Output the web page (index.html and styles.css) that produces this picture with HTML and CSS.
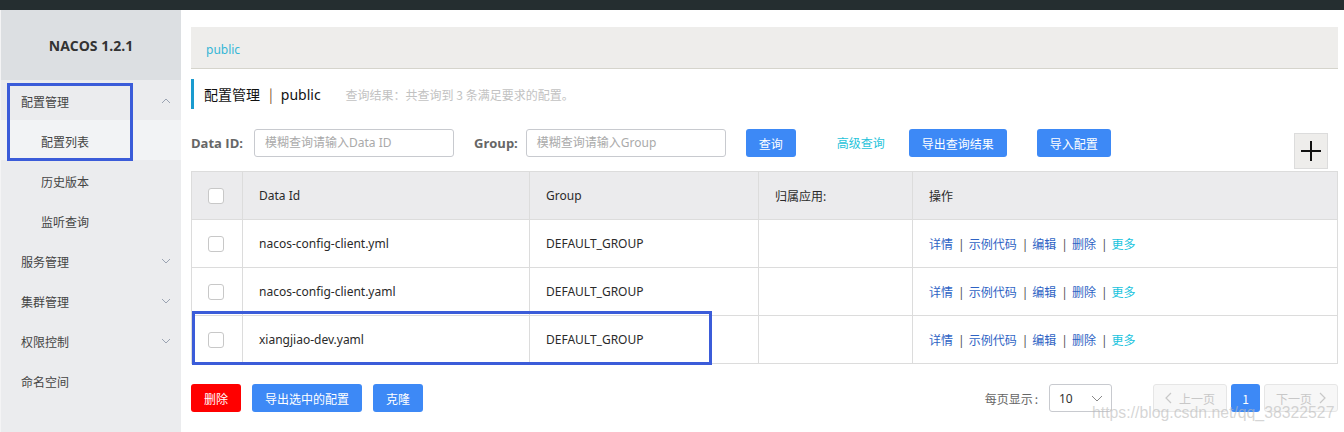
FILE: index.html
```html
<!DOCTYPE html>
<html lang="zh">
<head>
<meta charset="utf-8">
<title>NACOS 1.2.1</title>
<link rel="stylesheet" href="styles.css">
</head>
<body>
<div class="topbar"></div>
<div class="layout">
  <aside class="sidebar">
    <div class="brand">NACOS 1.2.1</div>
    <ul class="menu">
      <li class="item"><span>配置管理</span><svg class="chev" width="10" height="6" viewBox="0 0 10 6"><path d="M1 5 L5 1 L9 5" fill="none" stroke="#9aa3b2" stroke-width="1"/></svg></li>
      <li class="sub active">配置列表</li>
      <li class="sub">历史版本</li>
      <li class="sub">监听查询</li>
      <li class="item"><span>服务管理</span><svg class="chev" width="10" height="6" viewBox="0 0 10 6"><path d="M1 1 L5 5 L9 1" fill="none" stroke="#9aa3b2" stroke-width="1"/></svg></li>
      <li class="item"><span>集群管理</span><svg class="chev" width="10" height="6" viewBox="0 0 10 6"><path d="M1 1 L5 5 L9 1" fill="none" stroke="#9aa3b2" stroke-width="1"/></svg></li>
      <li class="item"><span>权限控制</span><svg class="chev" width="10" height="6" viewBox="0 0 10 6"><path d="M1 1 L5 5 L9 1" fill="none" stroke="#9aa3b2" stroke-width="1"/></svg></li>
      <li class="item"><span>命名空间</span></li>
    </ul>
  </aside>
  <main class="main">
    <div class="crumb"><span class="crumb-link">public</span></div>
    <div class="title">
      <span class="title-main">配置管理</span><span class="title-sep">|</span><span class="title-ns">public</span>
      <span class="title-info">查询结果：共查询到 3 条满足要求的配置。</span>
    </div>
    <div class="search">
      <label class="lbl">Data ID:</label>
      <div class="input">模糊查询请输入Data ID</div>
      <label class="lbl lbl-group">Group:</label>
      <div class="input input-group">模糊查询请输入Group</div>
      <button class="btn btn-query">查询</button>
      <span class="adv">高级查询</span>
      <button class="btn btn-export">导出查询结果</button>
      <button class="btn btn-import">导入配置</button>
      <div class="plus"><svg width="22" height="22" viewBox="0 0 22 22"><path d="M1 11 H21 M11 1 V21" stroke="#111" stroke-width="2"/></svg></div>
    </div>
    <table class="grid">
      <colgroup>
        <col style="width:51px"><col style="width:287px"><col style="width:229px"><col style="width:154px"><col>
      </colgroup>
      <thead>
        <tr><th class="ck"><span class="box"></span></th><th>Data Id</th><th>Group</th><th>归属应用:</th><th>操作</th></tr>
      </thead>
      <tbody>
        <tr><td class="ck"><span class="box"></span></td><td>nacos-config-client.yml</td><td>DEFAULT_GROUP</td><td></td>
          <td class="ops"><a>详情</a><i>|</i><a>示例代码</a><i>|</i><a>编辑</a><i>|</i><a>删除</a><i>|</i><a class="more">更多</a></td></tr>
        <tr><td class="ck"><span class="box"></span></td><td>nacos-config-client.yaml</td><td>DEFAULT_GROUP</td><td></td>
          <td class="ops"><a>详情</a><i>|</i><a>示例代码</a><i>|</i><a>编辑</a><i>|</i><a>删除</a><i>|</i><a class="more">更多</a></td></tr>
        <tr><td class="ck"><span class="box"></span></td><td>xiangjiao-dev.yaml</td><td>DEFAULT_GROUP</td><td></td>
          <td class="ops"><a>详情</a><i>|</i><a>示例代码</a><i>|</i><a>编辑</a><i>|</i><a>删除</a><i>|</i><a class="more">更多</a></td></tr>
      </tbody>
    </table>
    <div class="footer">
      <div class="actions">
        <button class="btn btn-del">删除</button>
        <button class="btn btn-exp2">导出选中的配置</button>
        <button class="btn btn-clone">克隆</button>
      </div>
      <div class="pager">
        <span class="pagesize-lbl">每页显示<span class="colon">:</span></span>
        <div class="select"><span>10</span><svg width="12" height="7" viewBox="0 0 12 7"><path d="M1 1 L6 6 L11 1" fill="none" stroke="#888" stroke-width="1"/></svg></div>
        <div class="pbtn prev"><svg width="7" height="12" viewBox="0 0 7 12"><path d="M6 1 L1 6 L6 11" fill="none" stroke="#c8c8c8" stroke-width="1.2"/></svg><span>上一页</span></div>
        <div class="pbtn cur">1</div>
        <div class="pbtn next"><span>下一页</span><svg width="7" height="12" viewBox="0 0 7 12"><path d="M1 1 L6 6 L1 11" fill="none" stroke="#c8c8c8" stroke-width="1.2"/></svg></div>
      </div>
    </div>
  </main>
</div>
<div class="mark mark-menu"></div>
<div class="mark mark-row"></div>
<div class="watermark">https://blog.csdn.net/qq_38322527</div>
</body>
</html>
```
FILE: styles.css
```css
* { box-sizing: border-box; }
html, body { margin: 0; padding: 0; }
body {
  width: 1344px;
  height: 432px;
  overflow: hidden;
  background: #fff;
  font-family: "Noto Sans", "Noto Sans CJK SC", sans-serif;
  font-size: 12px;
  color: #333;
  position: relative;
}
.topbar { height: 10px; background: #252e30; }
.layout { display: flex; height: 422px; }

.sidebar { width: 181px; flex: none; background: #ebecee; border-left: 1px solid #f4f4f5; }
.brand {
  height: 70px;
  background: #dcdfe2;
  display: flex; align-items: center; justify-content: center;
  font-family: "Open Sans", "Noto Sans", sans-serif;
  font-weight: 700; font-size: 14px; color: #333;
}
.menu { list-style: none; margin: 0; padding: 0; }
.menu li {
  height: 40px; display: flex; align-items: center; justify-content: space-between;
  font-family: "Noto Sans CJK SC", sans-serif; font-size: 12px; color: #444;
  padding-top: 2px;
}
.menu .item { padding-left: 20px; padding-right: 10px; }
.menu .sub { padding-left: 40px; }
.menu .active { background: #f2f3f5; }
.chev { display: block; }

.main { flex: 1; padding: 17px 6px 0 10px; min-width: 0; }
.crumb {
  height: 42px; background: #eeedeb; border-bottom: 1px solid #d5d4cc;
  display: flex; align-items: center; padding: 3px 0 0 15px;
}
.crumb-link { color: #35b6d6; font-size: 12px; }

.title {
  margin-top: 10px; height: 30px; border-left: 3px solid #1a9bcf;
  display: flex; align-items: center; padding-left: 10px;
  font-family: "Noto Sans CJK SC", sans-serif;
}
.title-main { font-size: 14px; color: #111; }
.title-sep { font-size: 14px; color: #7a5230; margin: 0 8px 0 9px; }
.title-ns { font-family: "Noto Sans", sans-serif; font-size: 14px; color: #111; }
.title-info { margin-left: 25px; font-size: 12px; color: #c2c2c2; }

.search { margin-top: 20px; display: flex; align-items: flex-start; }
.lbl {
  height: 28px; line-height: 28px; font-family: "Open Sans", sans-serif;
  font-weight: 700; font-size: 13px; color: #666;
}
.lbl-group { margin-left: 20px; }
.input {
  margin-left: 11px; width: 200px; height: 28px; border: 1px solid #c8cacf; border-radius: 3px;
  padding-left: 10px; line-height: 26px; color: #aaa; font-size: 12px;
}
.input-group { margin-left: 8px; }
.btn {
  height: 28px; border: none; border-radius: 3px; background: #3d89f6; color: #fff;
  font-family: "Noto Sans CJK SC", sans-serif; font-size: 12px; padding: 0; cursor: pointer;
}
.btn-query { margin-left: 20px; width: 50px; }
.adv { margin-left: 41px; height: 28px; line-height: 28px; color: #1fc3da; font-family: "Noto Sans CJK SC", sans-serif; }
.btn-export { margin-left: 24px; width: 98px; }
.btn-import { margin-left: 30px; width: 74px; }
.plus {
  margin-left: auto; margin-right: 10px; margin-top: 4px; width: 34px; height: 36px;
  background: #eeedeb; border: 1px solid #dcdcdc;
  display: flex; align-items: center; justify-content: center;
}
.plus svg { display: block; }

.grid { margin-top: 2px; width: 100%; border-collapse: collapse; table-layout: fixed; }
.grid th, .grid td {
  border: 1px solid #dcdcdc; height: 48px; padding: 0 0 0 16px; text-align: left;
  font-weight: 400; font-size: 12px; color: #2a2a2a; white-space: nowrap;
}
.grid th { background: #ebebed; font-family: "Noto Sans", "Noto Sans CJK SC", sans-serif; }
.grid .ck { padding-left: 16px; }
.box { display: block; width: 16px; height: 16px; border: 1px solid #c8c8c8; border-radius: 3px; background: #fff; }
.ops a { color: #2e63c4; font-family: "Noto Sans CJK SC", sans-serif; }
.ops a.more { color: #17c3dd; }
.ops i { font-style: normal; color: #555; margin: 0 4px 0 5px; }

.footer { margin-top: 20px; display: flex; justify-content: space-between; align-items: center; }
.actions { display: flex; gap: 11px; }
.btn-del { width: 50px; background: #ff0000; }
.btn-exp2 { width: 110px; }
.btn-clone { width: 50px; }
.pager { display: flex; align-items: center; }
.pagesize-lbl { color: #666; font-family: "Noto Sans CJK SC", sans-serif; }
.colon { margin-left: 2px; }
.select {
  margin-left: 11px; width: 63px; height: 28px; border: 1px solid #c8cacf; border-radius: 3px;
  display: flex; align-items: center; justify-content: space-between; padding: 0 8px 0 9px; color: #333;
}
.select svg { display: block; }
.pbtn {
  height: 28px; border-radius: 3px; display: flex; align-items: center; justify-content: center;
  font-family: "Noto Sans CJK SC", sans-serif;
}
.prev, .next { width: 74px; background: #f7f7f7; border: 1px solid #e6e6e6; color: #c8c8c8; gap: 7px; }
.prev { margin-left: 41px; }
.cur { width: 29px; margin: 0 4px; background: #3d89f6; color: #fff; }

.mark { position: absolute; border: 3px solid #3b5cd9; pointer-events: none; }
.mark-menu { left: 7px; top: 83px; width: 126px; height: 78px; }
.mark-row { left: 192px; top: 311px; width: 520px; height: 54px; }
.watermark {
  position: absolute; left: 1092px; top: 404px;
  font-family: "Liberation Sans", Arial, sans-serif; font-size: 15.8px; color: rgba(185,185,185,0.6);
  white-space: nowrap;
}
```
